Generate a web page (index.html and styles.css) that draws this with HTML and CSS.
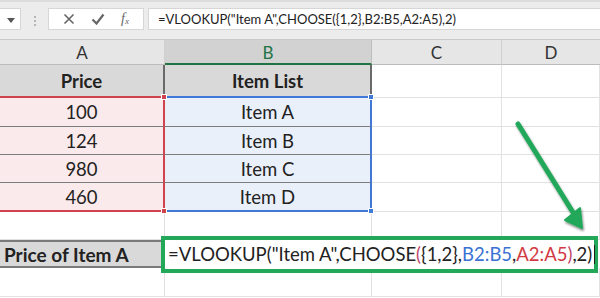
FILE: index.html
```html
<!DOCTYPE html>
<html>
<head>
<meta charset="utf-8">
<link rel="stylesheet" href="styles.css">
</head>
<body>
<div class="app">
  <div class="toolbar">
    <div class="namebox"><svg width="8" height="5" viewBox="0 0 8 5"><path d="M0 0h8L4 5z" fill="#555"/></svg></div>
    <div class="grip"><i></i><i></i><i></i></div>
    <div class="fbtns">
      <svg class="ic" width="12" height="12" viewBox="0 0 12 12"><path d="M1.5 1.5l9 9M10.5 1.5l-9 9" stroke="#666" stroke-width="1.6" fill="none"/></svg>
      <svg class="ic" width="14" height="12" viewBox="0 0 14 12"><path d="M1.5 6.5l4 4L12.5 1.5" stroke="#666" stroke-width="2.2" fill="none"/></svg>
      <span class="fx">f<sub>x</sub></span>
    </div>
    <div class="finput">=VLOOKUP("Item A",CHOOSE({1,2},B2:B5,A2:A5),2)</div>
  </div>
  <div class="sheet">
    <div class="ch">A</div>
    <div class="ch sel">B</div>
    <div class="ch">C</div>
    <div class="ch last">D</div>

    <div class="c hd a">Price<span class="hr hr-br"></span></div>
    <div class="c hd b">Item List<span class="hb hb-br"></span></div>
    <div class="c e"></div>
    <div class="c e"></div>

    <div class="c ra">100</div>
    <div class="c rb">Item A</div>
    <div class="c e"></div>
    <div class="c e"></div>

    <div class="c ra">124</div>
    <div class="c rb">Item B</div>
    <div class="c e"></div>
    <div class="c e"></div>

    <div class="c ra">980</div>
    <div class="c rb">Item C</div>
    <div class="c e"></div>
    <div class="c e"></div>

    <div class="c ra lastr">460<span class="hr hr-br"></span></div>
    <div class="c rb lastr">Item D<span class="hb hb-br"></span></div>
    <div class="c e"></div>
    <div class="c e"></div>

    <div class="c e"></div>
    <div class="c e"></div>
    <div class="c e"></div>
    <div class="c e"></div>

    <div class="c lbl">Price of Item A</div>
    <div class="c edit">=VLOOKUP("Item A",CHOOSE<span class="pk">(</span>{1,2},<span class="bl">B2:B5</span>,<span class="rd">A2:A5</span><span class="pk">)</span>,2)<span class="caret"></span></div>

    <div class="c e"></div>
    <div class="c e"></div>
    <div class="c e"></div>
    <div class="c e"></div>
  </div>
  <svg class="arrow" width="600" height="298" viewBox="0 0 600 298">
    <defs>
      <filter id="sh" x="-20%" y="-20%" width="140%" height="140%">
        <feGaussianBlur in="SourceAlpha" stdDeviation="1.2"/>
        <feOffset dx="1" dy="1.5" result="o"/>
        <feComponentTransfer><feFuncA type="linear" slope="0.45"/></feComponentTransfer>
        <feMerge><feMergeNode/><feMergeNode in="SourceGraphic"/></feMerge>
      </filter>
    </defs>
    <g filter="url(#sh)">
      <path d="M518 124L574 214" stroke="#23a85a" stroke-width="5" stroke-linecap="round" fill="none"/>
      <path d="M582 228L565 220L580 208z" fill="#23a85a" stroke="#23a85a" stroke-width="2" stroke-linejoin="round"/>
    </g>
  </svg>
</div>
</body>
</html>
```
FILE: styles.css
```css
* { box-sizing: border-box; }
html, body { margin: 0; padding: 0; background: #fff; }
body { font-family: "Lato", "Liberation Sans", sans-serif; color: #222; }
.app { position: relative; width: 600px; height: 298px; overflow: hidden; }

.toolbar {
  height: 40px;
  background: #ececec;
  display: flex;
  align-items: flex-start;
  padding-top: 8px;
  border-top: 2px solid #dcdcdc;
  border-bottom: 1px solid #c8c8c8;
}
.namebox {
  width: 21px; height: 22px; margin-top: -2px; padding-top: 2px;
  background: #fff; border: 1px solid #d6d6d6; border-left: none;
  display: flex; align-items: center; justify-content: flex-end; padding-right: 5px;
}
.grip { width: 27px; height: 22px; display: flex; flex-direction: column; align-items: center; justify-content: center; gap: 2px; }
.grip i { width: 2px; height: 2px; background: #b5b5b5; display: block; }
.fbtns {
  width: 96px; height: 22px; margin-top: -2px;
  background: #fff; border: 1px solid #d6d6d6;
  display: flex; align-items: center; justify-content: space-around; padding: 0 6px;
}
.fx { font-family: "Liberation Serif", serif; font-style: italic; color: #666; font-size: 14px; }
.fx sub { font-size: 9px; vertical-align: -1px; }
.finput {
  flex: 1; margin-left: 4px; height: 22px; margin-top: -2px;
  background: #fff; border: 1px solid #d6d6d6; border-right: none;
  font-size: 13px; line-height: 20px; padding-left: 9px; color: #222;
}

.sheet {
  display: grid;
  grid-template-columns: 165px 207px 130px 98px;
  grid-template-rows: 25px 33px 29px 28px 28px 29px 28px 28px 29px;
}
.ch {
  background: #e6e6e6; border-right: 1px solid #cfcfcf; border-bottom: 1px solid #bcbcbc;
  display: flex; align-items: center; justify-content: center; font-size: 17px; color: #333; padding-top: 1px;
}
.ch.sel { background: #d2d2d2; color: #217346; border-bottom: 2px solid #217346; border-right-color: #bdbdbd; }
.ch.last { border-right: none; }

.c { position: relative; display: flex; align-items: center; justify-content: center; font-size: 18.5px; color: #222; }
.c.e { border-right: 1px solid #e1e1e1; border-bottom: 1px solid #e1e1e1; }
.hd { background: #d9d9d9; font-weight: 700; }
.hd.a { border-right: 2px solid #6a6a6a; border-bottom: 2px solid #d0424c; }
.hd.b { border-right: 2px solid #6a6a6a; border-bottom: 2px solid #3f78d6; }
.ra { background: #fbeaeb; border-right: 2px solid #d0424c; border-bottom: 1px solid #7c7c7c; }
.rb { background: #eaf0fa; border-right: 2px solid #3f78d6; border-bottom: 1px solid #7c7c7c; }
.ra.lastr { border-bottom: 2px solid #d0424c; }
.rb.lastr { border-bottom: 2px solid #3f78d6; }
.hb, .hr { position: absolute; width: 6px; height: 6px; z-index: 2; border: 1px solid #fff; }
.hb { background: #3f78d6; }
.hr { background: #d0424c; }
.hb-br, .hr-br { right: -4px; bottom: -4px; }

.lbl {
  background: #d9d9d9; font-weight: 700; justify-content: flex-start; padding-left: 4px; font-size: 19px;
  border-top: 2px solid #7a7a7a; border-bottom: 2px solid #7a7a7a; border-right: 1px solid #e1e1e1;
}
.edit {
  grid-column: 2 / 5; justify-content: flex-start; padding-left: 3px; background: #fff; z-index: 3;
}
.edit::before {
  content: ""; position: absolute; left: -4px; right: 2px; top: -4px; bottom: -5px;
  border: 4px solid #23a85a; z-index: -1; background: #fff;
}
.pk { color: #c2456a; }
.bl { color: #3a72d4; }
.rd { color: #d23a43; }
.caret { display: inline-block; width: 1px; height: 19px; background: #222; margin-left: 2px; }

.arrow { position: absolute; left: 0; top: 0; pointer-events: none; }
```
